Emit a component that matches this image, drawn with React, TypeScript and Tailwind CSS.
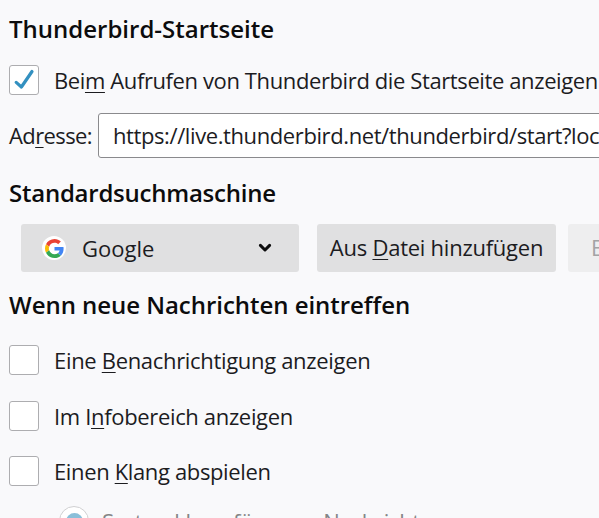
import React, { useState } from "react";
import clsx from "clsx";

type LabelProps = {
  text: string;
  // index of the underlined access key
  accessKey?: number;
  className?: string;
};

function Label({ text, accessKey, className }: LabelProps) {
  return (
    <span className={clsx("whitespace-pre", className)}>
      {accessKey === undefined ? (
        text
      ) : (
        <>
          {text.slice(0, accessKey)}
          <span className="underline decoration-1 underline-offset-[3px] [text-decoration-skip-ink:none]">
            {text[accessKey]}
          </span>
          {text.slice(accessKey + 1)}
        </>
      )}
    </span>
  );
}

function Heading({ text, className }: { text: string; className?: string }) {
  return (
    <h2 className={clsx("h-8 whitespace-pre text-[24px] leading-8 font-semibold text-[#0c0c0d]", className)}>
      {text}
    </h2>
  );
}

type CheckRowProps = LabelProps & { initial?: boolean; rowClass?: string };

function CheckRow({ text, accessKey, className, initial = false, rowClass }: CheckRowProps) {
  const [checked, setChecked] = useState(initial);

  return (
    <button
      role="checkbox"
      aria-checked={checked}
      onClick={() => setChecked(!checked)}
      className={clsx("flex h-[30px] items-center gap-[15px]", rowClass)}
    >
      <span className="flex size-[30px] shrink-0 items-center justify-center rounded-[3px] border border-[#adadb0] bg-white">
        {checked && (
          <svg viewBox="0 0 30 30" className="size-[30px] shrink-0" fill="none">
            <path d="M7.2 17.4 L12.4 22 L23 6.5" stroke="#3390c0" strokeWidth="3.2" strokeLinecap="round" strokeLinejoin="round" />
          </svg>
        )}
      </span>
      <Label text={text} accessKey={accessKey} className={className} />
    </button>
  );
}

function GoogleIcon() {
  return (
    <span className="flex size-6 items-center justify-center rounded-full bg-white">
      <svg viewBox="0 0 48 48" className="size-[19px]">
        <path fill="#EA4335" d="M24 9.5c3.54 0 6.71 1.22 9.21 3.6l6.85-6.85C35.9 2.38 30.47 0 24 0 14.62 0 6.51 5.38 2.56 13.22l7.98 6.19C12.43 13.72 17.74 9.5 24 9.5z" />
        <path fill="#4285F4" d="M46.98 24.55c0-1.57-.15-3.09-.38-4.55H24v9.02h12.94c-.58 2.96-2.26 5.48-4.78 7.18l7.73 6c4.51-4.18 7.09-10.36 7.09-17.65z" />
        <path fill="#FBBC05" d="M10.53 28.59c-.48-1.45-.76-2.99-.76-4.59s.27-3.14.76-4.59l-7.98-6.19C.92 16.46 0 20.12 0 24c0 3.88.92 7.54 2.56 10.78l7.97-6.19z" />
        <path fill="#34A853" d="M24 48c6.48 0 11.93-2.13 15.89-5.81l-7.73-6c-2.15 1.45-4.92 2.3-8.16 2.3-6.26 0-11.57-4.22-13.47-9.91l-7.98 6.19C6.51 42.62 14.62 48 24 48z" />
      </svg>
    </span>
  );
}

export default function App() {
  const [url, setUrl] = useState("https://live.thunderbird.net/thunderbird/start?locale=de");

  return (
    <main className="h-[518px] w-[599px] overflow-hidden bg-[#f9f9fb] pt-[13px] pl-[9px] font-['Open_Sans','Noto_Sans',sans-serif] text-[22px] leading-[30px] text-[#1c1c1f]">
      <Heading text="Thunderbird-Startseite" />
      <CheckRow
        text="Beim Aufrufen von Thunderbird die Startseite anzeigen"
        accessKey={3}
        initial
        className="tracking-[-0.39px]"
        rowClass="mt-5"
      />

      <div className="mt-[18px] flex h-[45px] w-[800px] items-center">
        <label htmlFor="address" className="w-[89px] shrink-0 pb-0.5">
          <Label text="Adresse:" accessKey={2} className="tracking-[-0.6px]" />
        </label>
        <input
          id="address"
          value={url}
          onChange={(e) => setUrl(e.target.value)}
          className="h-[45px] grow rounded-[3px] border border-[#8a8a8d] bg-white pb-px pl-3.5 tracking-[-0.4px] outline-none"
        />
      </div>

      <Heading text="Standardsuchmaschine" className="mt-[19px] tracking-[-0.24px]" />
      <div className="mt-[15px] flex h-12 w-[800px] pl-3">
        <button className="flex w-[278px] items-center rounded-[3px] bg-[#e0e0e1] pr-[27px] pl-[21px]">
          <GoogleIcon />
          <Label text="Google" className="ml-4" />
          <svg viewBox="0 0 14 10" className="ml-auto h-[10px] w-[14px]" fill="none">
            <path d="M2.4 2.4 L7 7 L11.6 2.4" stroke="#0c0c0d" strokeWidth="3" strokeLinecap="round" strokeLinejoin="round" />
          </svg>
        </button>
        <button className="ml-[18px] w-[239px] rounded-[3px] bg-[#e0e0e1] pb-0.5">
          <Label text="Aus Datei hinzufügen" accessKey={4} className="tracking-[-0.25px]" />
        </button>
        <button disabled className="ml-3 w-[150px] rounded-[3px] bg-[#eeeeef] pb-0.5 pl-[23px] text-left text-[#a3a3a5]">
          <Label text="Entfernen" />
        </button>
      </div>

      <Heading text="Wenn neue Nachrichten eintreffen" className="mt-[17px] tracking-[-0.04px]" />
      <CheckRow text="Eine Benachrichtigung anzeigen" accessKey={5} className="tracking-[-0.32px]" rowClass="mt-6" />
      <CheckRow text="Im Infobereich anzeigen" accessKey={4} className="tracking-[-0.34px]" rowClass="mt-[26px]" />
      <CheckRow text="Einen Klang abspielen" accessKey={6} className="tracking-[-0.36px]" rowClass="mt-[25px]" />

      <div className="mt-5 flex h-[30px] items-center gap-[13px] pl-[50px] text-[#858587]">
        <span className="flex size-[30px] items-center justify-center rounded-full border border-[#d0d0d2] bg-white">
          <span className="size-[17px] rounded-full bg-[#8abfd9]" />
        </span>
        <Label text="Systemklang für neue Nachrichten" className="tracking-[-0.3px]" />
      </div>
    </main>
  );
}
